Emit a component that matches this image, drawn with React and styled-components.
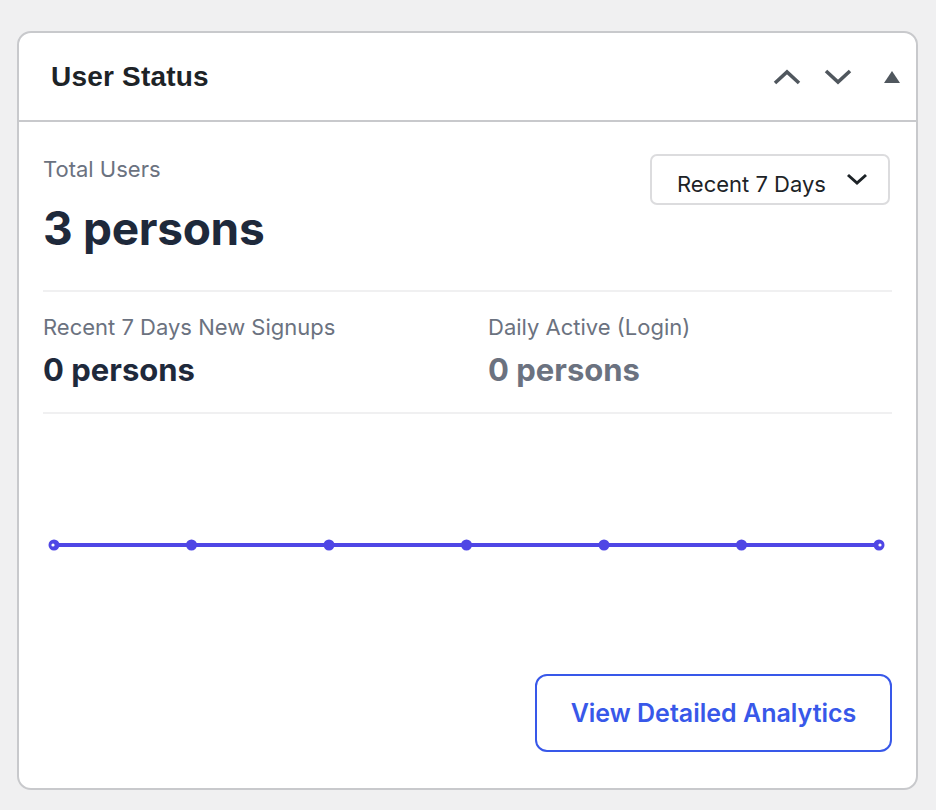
import React, { useState } from "react";
import styled, { createGlobalStyle } from "styled-components";

const GlobalStyle = createGlobalStyle`
  html, body {
    margin: 0;
    padding: 0;
    background: #f0f0f1;
    font-family: Inter, "Liberation Sans", Arial, sans-serif;
  }
`;

const days = [0, 0, 0, 0, 0, 0, 0];

const App = () => {
  const [range] = useState("Recent 7 Days");

  return (
    <>
      <GlobalStyle />
      <Page>
        <Card>
          <CardHeader>
            <Title>User Status</Title>
            <HeaderActions>
              <IconButton aria-label="Move up">
                <svg width="28" height="18" viewBox="0 0 28 18">
                  <path
                    d="M2 15 L14 4 L26 15"
                    fill="none"
                    stroke="#50575e"
                    strokeWidth="3.6"
                  />
                </svg>
              </IconButton>
              <IconButton aria-label="Move down">
                <svg width="28" height="18" viewBox="0 0 28 18">
                  <path
                    d="M2 3 L14 14 L26 3"
                    fill="none"
                    stroke="#50575e"
                    strokeWidth="3.6"
                  />
                </svg>
              </IconButton>
              <IconButton aria-label="Toggle panel" spaced>
                <svg width="18" height="14" viewBox="0 0 18 14">
                  <path d="M9 1 L17 13 L1 13 Z" fill="#50575e" />
                </svg>
              </IconButton>
            </HeaderActions>
          </CardHeader>

          <CardBody>
            <TopRow>
              <div>
                <Label>Total Users</Label>
                <BigValue>3 persons</BigValue>
              </div>
              <RangeSelect>
                <span>{range}</span>
                <svg width="22" height="14" viewBox="0 0 22 14">
                  <path
                    d="M2 3 L11 11 L20 3"
                    fill="none"
                    stroke="#1d2327"
                    strokeWidth="3"
                  />
                </svg>
              </RangeSelect>
            </TopRow>

            <StatsRow>
              <Stat>
                <Label>Recent 7 Days New Signups</Label>
                <StatValue>0 persons</StatValue>
              </Stat>
              <Stat>
                <Label>Daily Active (Login)</Label>
                <StatValue muted>0 persons</StatValue>
              </Stat>
            </StatsRow>

            <Chart>
              <svg width="100%" height="100%" viewBox="0 0 849 238">
                <line
                  x1="11"
                  y1="131"
                  x2="836"
                  y2="131"
                  stroke="#4f46e5"
                  strokeWidth="4"
                />
                {days.map((_, i) => {
                  const x = 11 + (825 / 6) * i;
                  return <circle key={i} cx={x} cy="131" r="5.5" fill="#4f46e5" />;
                })}
                <circle cx="10" cy="131" r="1.6" fill="#fff" />
                <circle cx="837" cy="131" r="1.6" fill="#fff" />
              </svg>
            </Chart>

            <Footer>
              <OutlineButton>View Detailed Analytics</OutlineButton>
            </Footer>
          </CardBody>
        </Card>
      </Page>
    </>
  );
};

const Page = styled.div`
  padding: 31px 18px 22px 17px;
`;

const Card = styled.div`
  background: #fff;
  border: 2px solid #c8c9cc;
  border-radius: 14px;
  overflow: hidden;
`;

const CardHeader = styled.div`
  display: flex;
  align-items: center;
  justify-content: space-between;
  height: 87px;
  padding: 0 15px 0 32px;
  border-bottom: 2px solid #c8c9cc;
`;

const Title = styled.h2`
  margin: 0;
  font-family: "Liberation Sans", Arial, sans-serif;
  font-size: 28px;
  font-weight: 700;
  color: #1d2327;
  letter-spacing: 0.2px;
`;

const HeaderActions = styled.div`
  display: flex;
  align-items: center;
  gap: 23px;
`;

const IconButton = styled.button`
  background: none;
  border: none;
  padding: 0;
  margin-left: ${(p) => (p.spaced ? "8px" : "0")};
  display: flex;
  align-items: center;
  cursor: pointer;
`;

const CardBody = styled.div`
  padding: 32px 24px 36px 24px;
`;

const TopRow = styled.div`
  display: flex;
  justify-content: space-between;
  align-items: flex-start;
  padding-bottom: 35px;
  border-bottom: 2px solid #f0f0f1;
`;

const Label = styled.div`
  font-size: 22px;
  line-height: 30px;
  color: #6b7280;
`;

const BigValue = styled.div`
  margin-top: 17px;
  font-size: 46px;
  line-height: 54px;
  font-weight: 700;
  color: #1e293b;
  letter-spacing: -0.3px;
`;

const RangeSelect = styled.div`
  display: flex;
  align-items: center;
  justify-content: space-between;
  box-sizing: border-box;
  width: 240px;
  height: 51px;
  margin-right: 2px;
  padding: 8px 20px 0 25px;
  border: 2px solid #dcdcde;
  border-radius: 7px;
  font-size: 22px;
  color: #1d2327;
  cursor: pointer;

  svg {
    margin-top: -10px;
  }
`;

const StatsRow = styled.div`
  display: grid;
  grid-template-columns: 445px 1fr;
  padding: 20px 0 24px;
  border-bottom: 2px solid #f0f0f1;
`;

const Stat = styled.div`
  display: flex;
  flex-direction: column;
  gap: 10px;
`;

const StatValue = styled.div`
  font-size: 31px;
  line-height: 36px;
  font-weight: 700;
  color: ${(p) => (p.muted ? "#6b7280" : "#1e293b")};
`;

const Chart = styled.div`
  height: 238px;
`;

const Footer = styled.div`
  display: flex;
  justify-content: flex-end;
  margin-top: 22px;
`;

const OutlineButton = styled.button`
  box-sizing: border-box;
  width: 357px;
  height: 78px;
  background: #fff;
  border: 2px solid #3858e9;
  border-radius: 12px;
  font-family: Inter, "Liberation Sans", Arial, sans-serif;
  font-size: 25px;
  font-weight: 600;
  color: #3858e9;
  cursor: pointer;
`;

export default App;
